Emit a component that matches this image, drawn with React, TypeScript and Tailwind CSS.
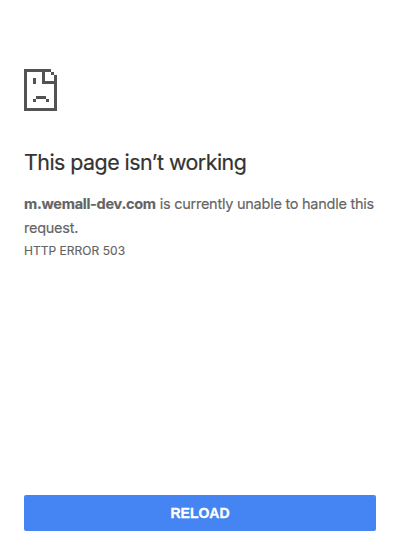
import React from "react";

function SadPageIcon() {
  return (
    <svg className="block h-[42px] w-[33px]" viewBox="0 0 33 42" fill="#535353" shapeRendering="crispEdges" aria-hidden="true">
      <path d="M0 0h27v3h-6v9h12v30H0zM3 3v36h27V15H18V3z" fillRule="evenodd" />
      <path d="M27 3h3v3h-3zM30 6h3v6h-3z" />
      <path d="M9 9h3v6H9zM12 27h10v3H12zM9 30h3v3H9zM22 30h3v3h-3z" />
    </svg>
  );
}

export default function App() {
  return (
    <main className="flex h-[553px] w-[400px] flex-col bg-white px-6 pt-[69px] pb-[22px] font-['Inter','Liberation_Sans',sans-serif] text-[#646464]">
      <SadPageIcon />
      <h1 className="mt-[37px] text-[21.4px] leading-7 font-normal tracking-[-0.53px] whitespace-nowrap text-[#333] [-webkit-text-stroke:0.2px_#333]">
        This page isn’t working
      </h1>
      <p className="mt-4 text-[14.5px] leading-6 tracking-[-0.25px] whitespace-nowrap [-webkit-text-stroke:0.15px_#646464]">
        <strong className="font-bold tracking-[-0.28px]">m.wemall-dev.com</strong> is currently unable to handle this
        <br />
        request.
      </p>
      <p className="mt-px text-[12px] leading-5 tracking-[0.03px] [-webkit-text-stroke:0.15px_#646464]">HTTP ERROR 503</p>
      <button className="mt-auto h-9 w-full rounded-[2px] bg-[#4484f3] font-['Liberation_Sans',Arial,sans-serif] text-[14px] font-bold text-white [-webkit-text-stroke:0.3px_white]">
        RELOAD
      </button>
    </main>
  );
}
